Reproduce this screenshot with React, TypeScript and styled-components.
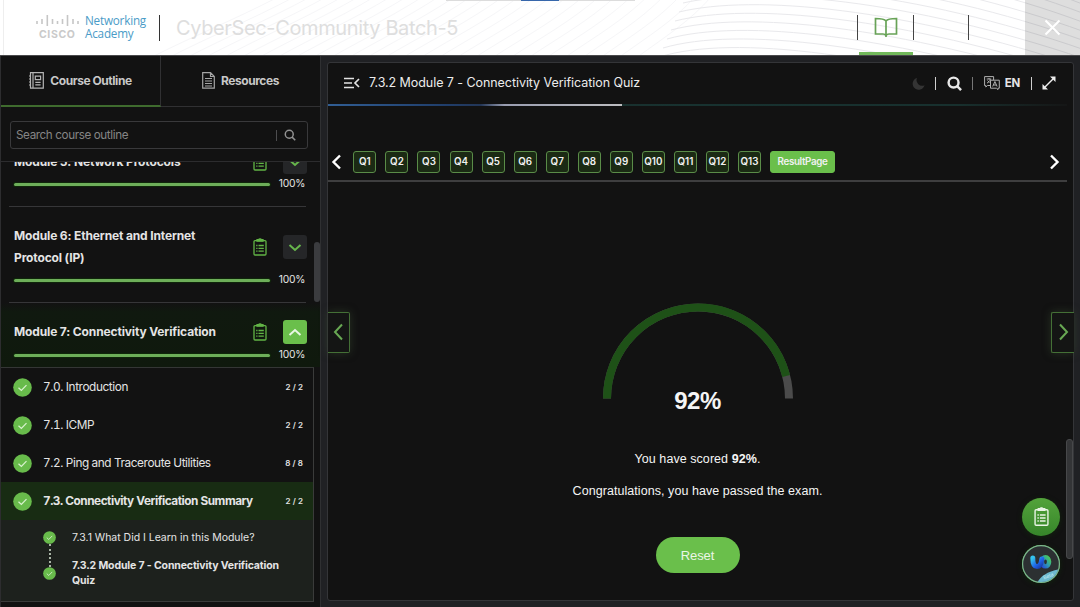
import React from "react";
import styled, { createGlobalStyle } from "styled-components";

const GlobalStyle = createGlobalStyle`
  * { box-sizing: border-box; }
  html, body { margin: 0; padding: 0; }
  body { background: #202124; overflow: hidden; }
  button { font: inherit; padding: 0; border: 0; background: none; color: inherit; }
`;

const ui = `Inter, "Liberation Sans", sans-serif`;
const arial = `"Liberation Sans", Arial, sans-serif`;

const Page = styled.div`
  width: 1080px;
  height: 607px;
  display: flex;
  flex-direction: column;
  overflow: hidden;
  background: #202124;
  color: #e4e4e4;
  font-family: ${ui};
`;

/* ---------- top bar ---------- */
const TopBar = styled.header`
  position: relative;
  height: 55px;
  flex: none;
  display: flex;
  align-items: center;
  background: #fff;
  overflow: hidden;
`;
const Waves = styled.svg`
  position: absolute;
  inset: 0;
`;
const Brand = styled.div`
  position: relative;
  width: 160px;
  height: 26px;
  padding-left: 36px;
  display: flex;
  border-right: 1px solid #333;
`;
const CiscoMark = styled.div`
  width: 49px;
  display: flex;
  flex-direction: column;
`;
const CiscoWord = styled.span`
  margin: 2px 0 0 3px;
  font: 700 10.5px/11px ${ui};
  letter-spacing: 0.6px;
  color: #cacaca;
`;
const Academy = styled.div`
  margin-top: -1px;
  font: 400 11.7px/13px "Open Sans", sans-serif;
  letter-spacing: -0.2px;
  color: #4a9bc7;
  white-space: nowrap;
`;
const CourseTitle = styled.h1`
  position: relative;
  margin: 0 0 0 16px;
  flex: 1;
  font-size: 20px;
  font-weight: 400;
  letter-spacing: -0.37px;
  color: #dedede;
`;
const TopTab = styled.div<{ $active?: boolean; $last?: boolean }>`
  position: relative;
  width: ${(p) => (p.$last ? 57 : 55.5)}px;
  height: 55px;
  display: flex;
  align-items: center;
  justify-content: center;
  padding-left: 3px;
  &::before {
    content: "";
    position: absolute;
    left: 0;
    top: 15px;
    width: 1px;
    height: 25px;
    background: #444;
  }
  &::after {
    content: "";
    position: absolute;
    left: 2px;
    right: 0;
    bottom: 0;
    height: 3px;
    background: ${(p) => (p.$active ? "#72b95b" : "transparent")};
  }
`;
const CloseButton = styled.button`
  position: relative;
  width: 55px;
  height: 55px;
  display: flex;
  align-items: center;
  justify-content: center;
  background: rgba(0, 0, 0, 0.13);
`;
const TopStrip = styled.div`
  position: absolute;
  top: 0;
  left: 446px;
  width: 189px;
  height: 1px;
  background: #dcdcdc;
  &::after {
    content: "";
    position: absolute;
    left: 75px;
    width: 38px;
    height: 1px;
    background: #3767ab;
  }
`;

/* ---------- body ---------- */
const Body = styled.div`
  flex: 1;
  min-height: 0;
  display: flex;
  border-top: 1px solid #4a4a4c;
`;

/* ---------- sidebar ---------- */
const Sidebar = styled.aside`
  position: relative;
  width: 321px;
  flex: none;
  display: flex;
  flex-direction: column;
  background: #121212;
  border-left: 1px solid #2d2d2f;
  border-right: 1px solid #2f3032;
`;
const Tabs = styled.div`
  display: flex;
  height: 51px;
  flex: none;
`;
const Tab = styled.button<{ $active?: boolean }>`
  flex: 1;
  display: flex;
  align-items: center;
  justify-content: center;
  gap: 6px;
  padding-bottom: ${(p) => (p.$active ? 0 : 1)}px;
  font-size: 12px;
  font-weight: 700;
  letter-spacing: -0.45px;
  color: #c8c8c8;
  border-right: ${(p) => (p.$active ? "1px solid #303032" : "0")};
  border-bottom: ${(p) => (p.$active ? "2px solid #3f6b2e" : "1px solid #303032")};
`;
const SearchBox = styled.div`
  margin: 14px 12px 12px 9px;
  height: 28px;
  flex: none;
  display: flex;
  align-items: center;
  padding: 0 11px 0 5px;
  border: 1px solid #39393b;
  border-radius: 3px;
  font-size: 11.7px;
  letter-spacing: -0.4px;
  color: #858585;
`;
const SearchText = styled.span`
  flex: 1;
`;
const Bar = styled.i<{ $h: number; $c: string }>`
  display: block;
  width: 1px;
  height: ${(p) => p.$h}px;
  background: ${(p) => p.$c};
`;
const SearchBar = styled(Bar)`
  margin-right: 7px;
`;
const Outline = styled.div`
  flex: 1;
  min-height: 0;
  overflow: hidden;
  border-top: 1px solid #2c2c2e;
`;
const OutlineInner = styled.div`
  margin-top: -29px;
`;
const Module = styled.section<{ $open?: boolean }>`
  padding-top: 18px;
  ${(p) =>
    p.$open
      ? `background: linear-gradient(#121212 0, #10190f 9px, #0f190d 100%);`
      : `&::after { content: ""; display: block; height: 1px; margin: 11px 14px 0 8px; background: #363638; }`}
`;
const ModuleHead = styled.div`
  display: flex;
  align-items: center;
  padding: 0 14px 0 13px;
  min-height: 22px;
`;
const ModuleTitle = styled.h2`
  margin: 0;
  flex: 1;
  white-space: pre-line;
  font-size: 12px;
  font-weight: 700;
  letter-spacing: -0.14px;
  line-height: 22px;
`;
const Toggle = styled.button<{ $open?: boolean }>`
  width: 24px;
  height: 24px;
  margin: -1px -1px -1px 16px;
  display: flex;
  align-items: center;
  justify-content: center;
  border-radius: 3px;
  background: ${(p) => (p.$open ? "#6abf4b" : "#252628")};
`;
const ProgressRow = styled.div<{ $open?: boolean }>`
  height: ${(p) => (p.$open ? 24 : 22)}px;
  display: flex;
  align-items: center;
  padding: 0 15px ${(p) => (p.$open ? 1 : 0)}px 13px;
  justify-content: space-between;
  font-size: 10.3px;
  letter-spacing: -0.25px;
`;
const Percent = styled.span`
  margin-top: -2px;
`;
const Progress = styled.div`
  width: 256px;
  height: 3px;
  margin-top: 1px;
  border-radius: 2px;
  background: #6dae59;
  box-shadow: 0 0 1px 1px #10290a;
`;
const Chapters = styled.div`
  width: 313px;
  height: 235px;
  border-top: 1px solid #343635;
  border-right: 1px solid #3a3b3a;
  border-bottom: 1px solid #3a3b3a;
`;
const Chapter = styled.div<{ $active?: boolean }>`
  height: 38px;
  display: flex;
  align-items: center;
  padding: 0 10px 0 12px;
  font-size: 11.8px;
  font-weight: ${(p) => (p.$active ? 700 : 400)};
  font-variant-numeric: tabular-nums;
  letter-spacing: ${(p) => (p.$active ? -0.48 : -0.4)}px;
  background: ${(p) => (p.$active ? "#182c13" : "transparent")};
  span { flex: 1; margin-left: 11px; }
`;
const Count = styled.small`
  font: 600 8px ${ui};
  letter-spacing: 0.1px;
`;
const Lessons = styled.div`
  height: 81px;
  display: flex;
  padding: 11px 20px 0 42px;
  background: #1d211d;
`;
const Track = styled.div`
  width: 13px;
  display: flex;
  flex-direction: column;
  align-items: center;
`;
const Dots = styled.div`
  height: 23px;
  border-left: 2px dotted #a9b5a6;
`;
const LessonList = styled.div`
  margin: -1px 0 0 16px;
  font-size: 10.5px;
  line-height: 15px;
`;
const Lesson = styled.p<{ $active?: boolean }>`
  margin: 0 0 13px;
  white-space: pre-line;
  font-weight: ${(p) => (p.$active ? 700 : 400)};
  letter-spacing: ${(p) => (p.$active ? -0.13 : -0.02)}px;
`;
const SideScroll = styled.div`
  position: absolute;
  right: 0;
  top: 186px;
  width: 6px;
  height: 60px;
  border-radius: 3px;
  background: #3b3c3f;
`;

/* ---------- main panel ---------- */
const Panel = styled.main`
  position: relative;
  width: 747px;
  height: 539px;
  margin: 6px 0 0 6px;
  display: flex;
  flex-direction: column;
  background: #121212;
  border: 1px solid #343538;
  border-radius: 3px;
`;
const PanelHead = styled.div`
  height: 41px;
  flex: none;
  display: flex;
  align-items: center;
  padding: 0 17px 1px 16px;
`;
const PanelTitle = styled.h2`
  margin: -1px 0 0 9px;
  flex: 1;
  font-size: 12.5px;
  font-weight: 400;
  letter-spacing: -0.06px;
  color: #ececec;
`;
const Tools = styled.div`
  display: flex;
  align-items: center;
  gap: 10.5px;
  font-size: 11.5px;
  font-weight: 700;
`;
const Language = styled.span`
  display: flex;
  align-items: center;
  gap: 5px;
  letter-spacing: -0.3px;
`;
const ReadLine = styled.div`
  height: 2px;
  width: 739px;
  background: linear-gradient(90deg, #1c2b29, #183230 50%, #18302e 85%, #151616);
  &::before {
    content: "";
    display: block;
    width: 294px;
    height: 2px;
    background: linear-gradient(90deg, #315e94, #203e6b 40%, #233657 52%, #999db0 60%, #bdbdc0);
  }
`;
const QuizNav = styled.nav`
  width: 739px;
  height: 76px;
  display: flex;
  align-items: flex-end;
  padding: 0 7px 7px 3px;
  border-bottom: 2px solid #3e3e3f;
`;
const Questions = styled.div`
  flex: 1;
  display: flex;
  gap: 9.05px;
  margin-left: 11.4px;
`;
const Question = styled.button<{ $current?: boolean }>`
  width: ${(p) => (p.$current ? 65 : 23)}px;
  height: 22.5px;
  flex: none;
  border: 1px solid ${(p) => (p.$current ? "#6abf4b" : "#5a8c48")};
  border-radius: 3px;
  background: ${(p) => (p.$current ? "#6abf4b" : "#1b2a14")};
  font-size: 9.8px;
  font-weight: 600;
  letter-spacing: ${(p) => (p.$current ? "-0.36px" : "0")};
  color: #f1f1f1;
  white-space: nowrap;
  display: flex;
  align-items: center;
  justify-content: center;
`;
const NavArrow = styled.button`
  width: 11px;
  height: 23px;
  display: flex;
  align-items: center;
  justify-content: center;
`;
const Result = styled.div`
  width: 739px;
  display: flex;
  flex-direction: column;
  align-items: center;
  padding-top: 121px;
  font-family: ${arial};
  color: #f5f5f5;
`;
const Score = styled.strong`
  margin-top: -12px;
  font-size: 24px;
  line-height: 28px;
  letter-spacing: -0.5px;
`;
const Message = styled.p`
  margin: 0;
  font-size: 12.5px;
  line-height: 16px;
  letter-spacing: 0.06px;
`;
const Messages = styled.div`
  margin: 36px 0 38px;
  display: flex;
  flex-direction: column;
  align-items: center;
  gap: 16px;
`;
const Reset = styled.button`
  width: 84px;
  height: 36px;
  border-radius: 18px;
  background: #6abf4b;
  color: #eaf6e6;
  font-size: 13px;
  letter-spacing: -0.1px;
`;
const SideNav = styled.button<{ $right?: boolean }>`
  position: absolute;
  top: 248.5px;
  ${(p) => (p.$right ? "right: -1px;" : "left: 0;")}
  width: ${(p) => (p.$right ? 23 : 22)}px;
  height: 41px;
  display: flex;
  align-items: center;
  justify-content: center;
  border: 1px solid #447036;
  ${(p) => (p.$right ? "border-right-width: 0;" : "border-left-width: 0;")}
  border-radius: ${(p) => (p.$right ? "2px 0 0 2px" : "0 2px 2px 0")};
  background: #141514;
  box-shadow: 0 0 8px #3a4d3388;
`;
const Fab = styled.button<{ $top: number }>`
  position: absolute;
  right: 13px;
  top: ${(p) => p.$top}px;
  width: 38px;
  height: 38px;
  display: flex;
  align-items: center;
  justify-content: center;
  border-radius: 50%;
  background: linear-gradient(#53a33b, #36852a);
  box-shadow: 0 1px 5px #10250c;
`;
const MainScroll = styled.div`
  position: absolute;
  right: 0;
  top: 376px;
  width: 7px;
  height: 120px;
  border-radius: 3px;
  background: #343537;
  border: 1px solid #47484a;
`;

/* ---------- drawings ---------- */
const Clipboard = ({ w = 14, color = "#62b446" }: { w?: number; color?: string }) => (
  <svg width={w} height={(w * 18) / 14} viewBox="0 0 14 18" fill="none" stroke={color} strokeWidth="1.3">
    <rect x="1" y="2.6" width="12" height="14.4" rx="1" />
    <path d="M4 3.200V1.600h1.700C6 .5 8 .5 8.300 1.600H10v1.600z" fill={color} />
    <path d="M3.200 7.500h1.300M5.500 7.500h5.300M3.200 10.300h1.300M5.500 10.300h5.300M3.200 13.100h1.300M5.500 13.100h5.300" />
  </svg>
);
const Chevron = ({ d, w, h, color, sw = 2 }: { d: string; w: number; h: number; color: string; sw?: number }) => (
  <svg width={w} height={h} viewBox={`0 0 ${w} ${h}`} fill="none" stroke={color} strokeWidth={sw}>
    <path d={d} />
  </svg>
);
const Check = ({ size }: { size: number }) => (
  <svg width={size} height={size} viewBox="0 0 20 20">
    <circle cx="10" cy="10" r="9.800" fill="#68bb4b" />
    <path d="M5.800 10.200l3 2.900 5.400-5.600" fill="none" stroke="#d9f2cf" strokeWidth="1.300" />
  </svg>
);
const Search = ({ size, color, sw }: { size: number; color: string; sw: number }) => (
  <svg width={size} height={size} viewBox="0 0 16 16" fill="none" stroke={color} strokeWidth={sw}>
    <circle cx="7" cy="7" r="5.300" />
    <path d="M10.800 10.800L15 15" />
  </svg>
);

const bars: [number, number, number][] = [
  [0.5, 6, 9], [5.5, 4, 9], [10.8, 0, 11], [16, 4, 9], [21, 6, 9],
  [26, 4, 9], [31, 0, 11], [36.5, 4, 9], [41.5, 6, 9],
];

const ModuleItem = ({ title, open }: { title: string; open?: boolean }) => (
  <Module $open={open}>
    <ModuleHead>
      <ModuleTitle>{title}</ModuleTitle>
      <Clipboard />
      <Toggle $open={open}>
        {open ? (
          <Chevron d="M1.500 7L7 2 12.500 7" w={14} h={9} color="#e9f7e4" />
        ) : (
          <Chevron d="M1.500 2L7 7 12.500 2" w={14} h={9} color="#67b64c" />
        )}
      </Toggle>
    </ModuleHead>
    <ProgressRow $open={open}>
      <Progress />
      <Percent>100%</Percent>
    </ProgressRow>
  </Module>
);

const chapters = [
  ["7.0. Introduction", "2 / 2"],
  ["7.1. ICMP", "2 / 2"],
  ["7.2. Ping and Traceroute Utilities", "8 / 8"],
  ["7.3. Connectivity Verification Summary", "2 / 2"],
];

export default function App() {
  return (
    <>
      <GlobalStyle />
      <Page>
        <TopBar>
          <Waves width="1080" height="55" fill="none">
            {Array.from({ length: 28 }, (_, i) => (
              <path key={`l${i}`} stroke="#f6f6f8" d={`M${150 + i * 18} 58C${195 + i * 17.5} 35 ${230 + i * 17} 22 ${280 + i * 16} -4`} />
            ))}
            {Array.from({ length: 15 }, (_, i) => (
              <path
                key={`r${i}`}
                stroke="#e9e9ec"
                d={`M${655 + i * 4} ${66 - i * 9}C${730 + i * 4} ${42 - i * 8} ${880 + i * 4} ${62 - i * 9} 1085 ${122 - i * 9}`}
              />
            ))}
            <path d="M3.500 0V55" stroke="#eee" />
          </Waves>
          <TopStrip />
          <Brand>
            <CiscoMark>
              <svg width="44" height="12" stroke="#c6c6c6" strokeWidth="1.600">
                {bars.map(([x, a, b]) => (
                  <path key={x} d={`M${x + 0.5} ${a}V${b}`} />
                ))}
              </svg>
              <CiscoWord>CISCO</CiscoWord>
            </CiscoMark>
            <Academy>
              Networking
              <br />
              Academy
            </Academy>
          </Brand>
          <CourseTitle>CyberSec-Community Batch-5</CourseTitle>
          <TopTab $active>
            <svg width="24" height="22" viewBox="0 0 24 22" fill="none" stroke="#68a357" strokeWidth="1.700">
              <path d="M12 4C10.500 2 8 1.500 1.500 1.500V17H9c1.800 0 2.400.5 3 1.500.6-1 1.200-1.500 3-1.500h7.500V1.500C16 1.500 13.500 2 12 4zV20" />
            </svg>
          </TopTab>
          <TopTab />
          <TopTab $last />
          <CloseButton>
            <Chevron d="M1.500 1.500l14 14M15.500 1.500l-14 14" w={17} h={17} color="#fff" sw={2} />
          </CloseButton>
        </TopBar>
        <Body>
          <Sidebar>
            <Tabs>
              <Tab $active>
                <svg width="15" height="17" viewBox="0 0 15 17" fill="none" stroke="#b5b5b5" strokeWidth="1.200">
                  <path d="M1.500.7h12.800v15.500H1.500zM4 .7v15.500M6.300 4.200h5.300v3.500H6.300zM6.300 10.300h5.300M6.300 12.800h5.300M0 4h2M0 7h2M0 10h2M0 13h2" />
                </svg>
                Course Outline
              </Tab>
              <Tab>
                <svg width="13" height="17" viewBox="0 0 13 17" fill="none" stroke="#a5a5a5" strokeWidth="1.200">
                  <path d="M.7.7h7.800l3.800 3.800v11.700H.7zM8.500.7v3.800h3.800M3 6.500h7M3 9h7M3 11.500h7M3 14h7" />
                </svg>
                Resources
              </Tab>
            </Tabs>
            <SearchBox>
              <SearchText>Search course outline</SearchText>
              <SearchBar $h={11} $c="#4d4d4f" />
              <Search size={12} color="#929292" sw={2} />
            </SearchBox>
            <Outline>
              <OutlineInner>
                <ModuleItem title="Module 5: Network Protocols" />
                <ModuleItem title={"Module 6: Ethernet and Internet\nProtocol (IP)"} />
                <ModuleItem title="Module 7: Connectivity Verification" open />
                <Chapters>
                  {chapters.map(([name, count], i) => (
                    <Chapter key={name} $active={i === 3}>
                      <Check size={19} />
                      <span>{name}</span>
                      <Count>{count}</Count>
                    </Chapter>
                  ))}
                  <Lessons>
                    <Track>
                      <Check size={13} />
                      <Dots />
                      <Check size={13} />
                    </Track>
                    <LessonList>
                      <Lesson>7.3.1 What Did I Learn in this Module?</Lesson>
                      <Lesson $active>{"7.3.2 Module 7 - Connectivity Verification\nQuiz"}</Lesson>
                    </LessonList>
                  </Lessons>
                </Chapters>
              </OutlineInner>
            </Outline>
            <SideScroll />
          </Sidebar>
          <Panel>
            <PanelHead>
              <svg width="16" height="12" viewBox="0 0 16 12" fill="none" stroke="#e2e2e2" strokeWidth="1.700">
                <path d="M0 1.500h10M0 6h8M0 10.500h10M15 2l-4 4 4 4" />
              </svg>
              <PanelTitle>7.3.2 Module 7 - Connectivity Verification Quiz</PanelTitle>
              <Tools>
                <svg width="13" height="13" viewBox="0 0 13 13" fill="#343434">
                  <path d="M5 1A6 6 0 1 0 12.500 8.200 5.600 5.600 0 0 1 5 1z" />
                </svg>
                <Bar $h={13} $c="#cfcfcf" />
                <Search size={15} color="#e8e8e8" sw={2.6} />
                <Bar $h={13} $c="#777" />
                <Language>
                  <svg width="16" height="14" viewBox="0 0 16 14" fill="none" stroke="#b0b0b0" strokeWidth="1">
                    <path d="M6 9.500H3.500L1.800 11V9.500H.6V.6h9v3.500M6.500 4.200h8.800v8H14v1.400l-1.600-1.400H6.500zM2.700 3h4.500M5 2v1M6.300 3C6 5 4.500 6.500 3 7M3.500 4.500L5.500 6.500M8.700 10.500l2.200-5 2.200 5M9.500 9h2.800" />
                  </svg>
                  EN
                </Language>
                <Bar $h={13} $c="#cfcfcf" />
                <svg width="14" height="14" viewBox="0 0 14 14" fill="#eee" stroke="#eee" strokeWidth="1.500">
                  <path d="M3 11l8-8" />
                  <path d="M8 .5H13.500v5.500zM.5 8V13.500h5.500z" stroke="none" />
                </svg>
              </Tools>
            </PanelHead>
            <ReadLine />
            <QuizNav>
              <NavArrow>
                <Chevron d="M9 1.500L2.500 8 9 14.500" w={11} h={16} color="#fff" sw={2.4} />
              </NavArrow>
              <Questions>
                {Array.from({ length: 13 }, (_, i) => (
                  <Question key={i}>{`Q${i + 1}`}</Question>
                ))}
                <Question $current>ResultPage</Question>
              </Questions>
              <NavArrow>
                <Chevron d="M2 1.500L8.500 8 2 14.500" w={11} h={16} color="#fff" sw={2.4} />
              </NavArrow>
            </QuizNav>
            <Result>
              <svg width="190" height="96" viewBox="0 0 190 96" fill="none" strokeWidth="8">
                <path d="M4 95.500a91 91 0 0 1 182 0" stroke="#4b4b4b" />
                <path d="M4 95.500a91 91 0 0 1 182 0" stroke="#1e5117" pathLength="100" strokeDasharray="92 100" />
              </svg>
              <Score>92%</Score>
              <Messages>
                <Message>
                  You have scored <b>92%</b>.
                </Message>
                <Message>Congratulations, you have passed the exam.</Message>
              </Messages>
              <Reset>Reset</Reset>
            </Result>
            <SideNav>
              <Chevron d="M9 1.500L2 9l7 7.500" w={12} h={18} color="#68a853" />
            </SideNav>
            <SideNav $right>
              <Chevron d="M3 1.500L10 9l-7 7.500" w={12} h={18} color="#68a853" />
            </SideNav>
            <MainScroll />
            <Fab $top={435}>
              <Clipboard w={15} color="#e9f4e5" />
            </Fab>
            <Fab $top={482}>
              <svg width="38" height="38" viewBox="0 0 38 38" fill="none">
                <defs>
                  <linearGradient id="wl" x1="0" y1="0" x2="1" y2="1">
                    <stop stopColor="#35c4ee" />
                    <stop offset=".6" stopColor="#1e62e6" />
                    <stop offset="1" stopColor="#1a3da8" />
                  </linearGradient>
                  <linearGradient id="wr" x1="1" y1="0" x2="0" y2="1">
                    <stop stopColor="#48c95a" />
                    <stop offset=".5" stopColor="#2e9bb0" />
                    <stop offset="1" stopColor="#244ed8" />
                  </linearGradient>
                  <clipPath id="disc">
                    <circle cx="19" cy="19" r="18" />
                  </clipPath>
                </defs>
                <circle cx="19" cy="19" r="18.400" fill="#2c3032" stroke="#7cb58e" strokeWidth="1.200" />
                <ellipse cx="23.500" cy="16.800" rx="3.600" ry="4.600" stroke="url(#wr)" strokeWidth="4.400" />
                <path d="M10.800 13c0 5.500 1.500 8.600 4.200 8.600s4.300-3 4.800-7.600" stroke="url(#wl)" strokeWidth="5" strokeLinecap="round" />
                <g clipPath="url(#disc)">
                  <path d="M15 38c3-6 10-12 24-14v14z" fill="#6db9cf" />
                  <text x="22" y="34.500" fontSize="5" fontFamily="Inter, sans-serif" fill="#bfe8f2" transform="rotate(-20 22 34.500)">Beta</text>
                </g>
              </svg>
            </Fab>
          </Panel>
        </Body>
      </Page>
    </>
  );
}
